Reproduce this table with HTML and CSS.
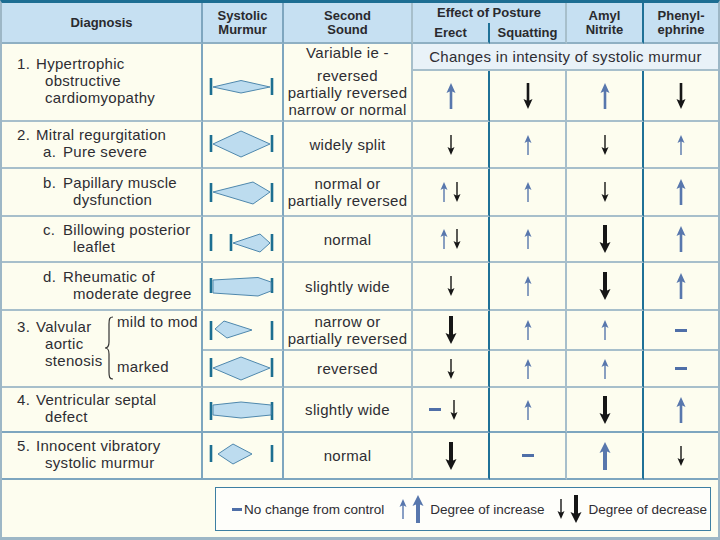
FILE: index.html
```html
<!DOCTYPE html>
<html>
<head>
<meta charset="utf-8">
<link rel="stylesheet" href="styles.css">
</head>
<body>
<svg class="defs" width="0" height="0">
  <defs>
    <symbol id="us" viewBox="0 0 8 20"><path d="M4 0 L7.5 8 L4.7 6.6 V20 H3.3 V6.6 L0.5 8 Z"/></symbol>
    <symbol id="ds" viewBox="0 0 8 20"><path d="M4 20 L7.5 12 L4.7 13.4 V0 H3.3 V13.4 L0.5 12 Z"/></symbol>
    <symbol id="um" viewBox="0 0 10 26"><path d="M5 0 L9.5 10 L6.3 8.6 V26 H3.7 V8.6 L0.5 10 Z"/></symbol>
    <symbol id="dm" viewBox="0 0 10 26"><path d="M5 26 L9.5 16 L6.3 17.4 V0 H3.7 V17.4 L0.5 16 Z"/></symbol>
    <symbol id="ul" viewBox="0 0 12 28"><path d="M6 0 L11.5 11 L8 9.5 V28 H4 V9.5 L0.5 11 Z"/></symbol>
    <symbol id="dl" viewBox="0 0 12 28"><path d="M6 28 L11.5 17 L8 18.5 V0 H4 V18.5 L0.5 17 Z"/></symbol>
  </defs>
</svg>

<div class="tbl">
  <!-- header -->
  <div class="c h k1 r2">Diagnosis</div>
  <div class="c h k2 r2">Systolic<br>Murmur</div>
  <div class="c h k3 r2">Second<br>Sound</div>
  <div class="c h k5 eff">Effect of Posture</div>
  <div class="c h k6 r2">Amyl<br>Nitrite</div>
  <div class="c h k7 r2">Phenyl-<br>ephrine</div>
  <div class="c h k4">Erect</div>
  <div class="c h k5">Squatting</div>

  <!-- 1 -->
  <div class="c dx k1 r2 pb4">
    <div class="ln i0"><span class="n">1.</span>Hypertrophic</div>
    <div class="ln i1">obstructive</div>
    <div class="ln i1">cardiomyopathy</div>
  </div>
  <div class="c mm k2 r2"><svg width="79" height="76"><rect class="bar" x="6.7" y="34" width="2.6" height="17"/><rect class="bar" x="67.7" y="34" width="2.6" height="17"/><polygon class="sh" points="10,43 38,36.5 67,43 38,49"/></svg></div>
  <div class="c ss k3 r2 top">
    <div class="ln first">Variable ie -</div>
    <div class="ln">reversed</div>
    <div class="ln">partially reversed</div>
    <div class="ln">narrow or normal</div>
  </div>
  <div class="c chg">Changes in intensity of systolic murmur</div>
  <div class="c ac k4"><svg class="ar um bl"><use href="#um"/></svg></div>
  <div class="c ac k5"><svg class="ar dm bk"><use href="#dm"/></svg></div>
  <div class="c ac k6"><svg class="ar um bl"><use href="#um"/></svg></div>
  <div class="c ac k7"><svg class="ar dm bk"><use href="#dm"/></svg></div>

  <!-- 2a -->
  <div class="c dx k1">
    <div class="ln i0"><span class="n">2.</span>Mitral regurgitation</div>
    <div class="ln i2"><span class="m">a.</span>Pure severe</div>
  </div>
  <div class="c mm k2"><svg width="79" height="45"><rect class="bar" x="6.7" y="13" width="2.6" height="17"/><rect class="bar" x="67.7" y="13" width="2.6" height="17"/><polygon class="sh" points="10,22 38,9 67,22 38,35"/></svg></div>
  <div class="c ss k3"><div class="ln">widely split</div></div>
  <div class="c ac k4"><svg class="ar ds bk"><use href="#ds"/></svg></div>
  <div class="c ac k5"><svg class="ar us bl"><use href="#us"/></svg></div>
  <div class="c ac k6"><svg class="ar ds bk"><use href="#ds"/></svg></div>
  <div class="c ac k7"><svg class="ar us bl"><use href="#us"/></svg></div>

  <!-- 2b -->
  <div class="c dx k1">
    <div class="ln i2"><span class="m">b.</span>Papillary muscle</div>
    <div class="ln i3">dysfunction</div>
  </div>
  <div class="c mm k2"><svg width="79" height="46"><rect class="bar" x="6.7" y="14" width="2.6" height="19"/><rect class="bar" x="67.7" y="14" width="2.6" height="19"/><polygon class="sh" points="10,23 50,13 67,23 50,35"/></svg></div>
  <div class="c ss k3"><div class="ln">normal or</div><div class="ln">partially reversed</div></div>
  <div class="c ac k4"><svg class="ar us bl"><use href="#us"/></svg><svg class="ar ds bk"><use href="#ds"/></svg></div>
  <div class="c ac k5"><svg class="ar us bl"><use href="#us"/></svg></div>
  <div class="c ac k6"><svg class="ar ds bk"><use href="#ds"/></svg></div>
  <div class="c ac k7"><svg class="ar um bl"><use href="#um"/></svg></div>

  <!-- 2c -->
  <div class="c dx k1">
    <div class="ln i2"><span class="m">c.</span>Billowing posterior</div>
    <div class="ln i3">leaflet</div>
  </div>
  <div class="c mm k2"><svg width="79" height="44"><rect class="bar" x="6.7" y="17" width="2.6" height="17"/><rect class="bar" x="26.7" y="17" width="2.6" height="17"/><rect class="bar" x="67.7" y="17" width="2.6" height="17"/><polygon class="sh" points="30,26 57,17 67,26 57,35"/></svg></div>
  <div class="c ss k3"><div class="ln">normal</div></div>
  <div class="c ac k4"><svg class="ar us bl"><use href="#us"/></svg><svg class="ar ds bk"><use href="#ds"/></svg></div>
  <div class="c ac k5"><svg class="ar us bl"><use href="#us"/></svg></div>
  <div class="c ac k6"><svg class="ar dl bk"><use href="#dl"/></svg></div>
  <div class="c ac k7"><svg class="ar um bl"><use href="#um"/></svg></div>

  <!-- 2d -->
  <div class="c dx k1">
    <div class="ln i2"><span class="m">d.</span>Rheumatic of</div>
    <div class="ln i3">moderate degree</div>
  </div>
  <div class="c mm k2"><svg width="79" height="46"><rect class="bar" x="6.7" y="15" width="2.6" height="15"/><rect class="bar" x="67.7" y="15" width="2.6" height="15"/><polygon class="sh" points="10,17 55,14.5 68,19 68,28 55,33 10,30"/></svg></div>
  <div class="c ss k3"><div class="ln">slightly wide</div></div>
  <div class="c ac k4"><svg class="ar ds bk"><use href="#ds"/></svg></div>
  <div class="c ac k5"><svg class="ar us bl"><use href="#us"/></svg></div>
  <div class="c ac k6"><svg class="ar dl bk"><use href="#dl"/></svg></div>
  <div class="c ac k7"><svg class="ar um bl"><use href="#um"/></svg></div>

  <!-- 3 mild -->
  <div class="c dx3 k1 r2">
    <div class="v3">
      <div class="ln"><span class="n">3.</span>Valvular</div>
      <div class="ln i4">aortic</div>
      <div class="ln i4">stenosis</div>
    </div>
    <svg class="brace" width="10" height="64"><path d="M9 1 C5.5 1 5 3 5 8 V26 C5 30 4 32 1 32 C4 32 5 34 5 38 V56 C5 61 5.5 63 9 63"/></svg>
    <div class="sev">
      <div class="ln">mild to mod</div>
      <div class="ln mk">marked</div>
    </div>
  </div>
  <div class="c mm k2"><svg width="79" height="38"><rect class="bar" x="6.7" y="10" width="2.6" height="19"/><rect class="bar" x="67.7" y="10" width="2.6" height="19"/><polygon class="sh" points="12,18 21,10 49,19 24,27"/></svg></div>
  <div class="c ss k3"><div class="ln">narrow or</div><div class="ln">partially reversed</div></div>
  <div class="c ac k4"><svg class="ar dl bk"><use href="#dl"/></svg></div>
  <div class="c ac k5"><svg class="ar us bl"><use href="#us"/></svg></div>
  <div class="c ac k6"><svg class="ar us bl"><use href="#us"/></svg></div>
  <div class="c ac k7"><span class="dash"></span></div>

  <!-- 3 marked -->
  <div class="c mm k2"><svg width="79" height="35"><rect class="bar" x="6.7" y="7" width="2.6" height="19"/><rect class="bar" x="67.7" y="7" width="2.6" height="19"/><polygon class="sh" points="10,17 38,6 67,17 38,29"/></svg></div>
  <div class="c ss k3"><div class="ln">reversed</div></div>
  <div class="c ac k4"><svg class="ar ds bk"><use href="#ds"/></svg></div>
  <div class="c ac k5"><svg class="ar us bl"><use href="#us"/></svg></div>
  <div class="c ac k6"><svg class="ar us bl"><use href="#us"/></svg></div>
  <div class="c ac k7"><span class="dash"></span></div>

  <!-- 4 -->
  <div class="c dx k1 bd">
    <div class="ln i0"><span class="n">4.</span>Ventricular septal</div>
    <div class="ln i1">defect</div>
  </div>
  <div class="c mm k2 bd"><svg width="79" height="43"><rect class="bar" x="6.7" y="14" width="2.6" height="18"/><rect class="bar" x="67.7" y="14" width="2.6" height="18"/><polygon class="sh" points="10,17 38,14 68,17 68,27 38,30 10,27"/></svg></div>
  <div class="c ss k3 bd"><div class="ln">slightly wide</div></div>
  <div class="c ac k4 bd shift"><span class="dash"></span><svg class="ar ds bk"><use href="#ds"/></svg></div>
  <div class="c ac k5 bd"><svg class="ar us bl"><use href="#us"/></svg></div>
  <div class="c ac k6 bd"><svg class="ar dl bk"><use href="#dl"/></svg></div>
  <div class="c ac k7 bd"><svg class="ar um bl"><use href="#um"/></svg></div>

  <!-- 5 -->
  <div class="c dx k1 bd">
    <div class="ln i0"><span class="n">5.</span>Innocent vibratory</div>
    <div class="ln i1">systolic murmur</div>
  </div>
  <div class="c mm k2 bd"><svg width="79" height="45"><rect class="bar" x="6.7" y="12" width="2.6" height="17"/><rect class="bar" x="67.7" y="12" width="2.6" height="17"/><polygon class="sh" points="15,21 30,11 49,21 30,31"/></svg></div>
  <div class="c ss k3 bd"><div class="ln">normal</div></div>
  <div class="c ac k4 bd"><svg class="ar dl bk"><use href="#dl"/></svg></div>
  <div class="c ac k5 bd"><span class="dash"></span></div>
  <div class="c ac k6 bd"><svg class="ar ul bl"><use href="#ul"/></svg></div>
  <div class="c ac k7 bd"><svg class="ar ds bk"><use href="#ds"/></svg></div>

  <!-- legend -->
  <div class="lg">
    <div class="box">
      <span class="dash ldash"></span>
      <span class="lt">No change from control</span>
      <svg class="ar us bl l1"><use href="#us"/></svg>
      <svg class="ar ul bl l2"><use href="#ul"/></svg>
      <span class="lt l3">Degree of increase</span>
      <svg class="ar ds bk l4"><use href="#ds"/></svg>
      <svg class="ar dl bk l2"><use href="#dl"/></svg>
      <span class="lt l3">Degree of decrease</span>
    </div>
  </div>
</div>
</body>
</html>
```

FILE: styles.css
```css
* { box-sizing: border-box; margin: 0; padding: 0; }
html, body { width: 720px; height: 540px; overflow: hidden; background: #ffffff; }
body { font-family: "Liberation Sans", Arial, sans-serif; color: #2e2d33; }
.defs { position: absolute; width: 0; height: 0; }

.tbl {
  display: grid;
  width: 720px;
  height: 540px;
  grid-template-columns: 201px 81px 129px 77px 77px 77px 74px;
  grid-template-rows: 20px 21px 27px 51px 47px 48px 46px 48px 40px 37px 45px 47px 57px;
  border-top: 3px solid #1d6e93;
  border-left: 2px solid #9db7c6;
  border-right: 2px solid #9db7c6;
  border-bottom: 3px solid #9db7c6;
  background: #fdfdef;
}

.c {
  border-right: 2px solid #a7bfcb;
  border-bottom: 2px solid #a7bfcb;
  display: flex;
  align-items: center;
  justify-content: center;
}
.r2 { grid-row: span 2; }
.k1, .k2 { border-right-color: #7ea6bf; }
.k3, .k5 { border-right-color: #a7bfcb; }
.k4, .k6 { border-right-color: #1f7197; }
.k7 { border-right: none; }
.bd { border-bottom-color: #7ea6bf; }

/* header */
.h {
  background: #c6e0f2;
  font-weight: bold;
  font-size: 13px;
  line-height: 14px;
  text-align: center;
  color: #2a2a2e;
  border-bottom-color: #8fb0c3;
}
.eff { grid-column: span 2; border-bottom: none; }

/* text */
.ln { font-size: 15px; line-height: 17px; letter-spacing: 0.3px; white-space: nowrap; }
.dx { flex-direction: column; align-items: flex-start; justify-content: center; padding-bottom: 3px; }
.pb4 { padding-bottom: 4px; }
.i0 { padding-left: 15px; }
.i1 { padding-left: 43px; }
.i2 { padding-left: 41px; }
.i3 { padding-left: 71px; }
.i4 { padding-left: 28px; }
.n { display: inline-block; width: 19px; }
.m { display: inline-block; width: 20px; }

.ss { flex-direction: column; text-align: center; }
.top { justify-content: flex-start; }
.first { margin-bottom: 6px; }

.chg {
  grid-column: span 4;
  background: #e9f2f8;
  border-right: none;
  font-size: 15px;
  letter-spacing: 0.3px;
}

/* row 3 diagnosis */
.dx3 { justify-content: flex-start; align-items: flex-start; padding-left: 15px; }
.v3 { width: 87px; padding-top: 7px; }
.brace { display: block; margin-top: 5px; margin-right: 3px; }
.brace path { fill: none; stroke: #333; stroke-width: 1.2; }
.sev { padding-top: 2px; }
.mk { margin-top: 28px; }

/* murmur */
.mm { display: block; }
.mm svg { display: block; }
.bar { fill: #1d6f91; }
.sh { fill: #bddcef; stroke: #4f88ad; stroke-width: 1; }

/* arrows */
.ac { gap: 5px; }
.ar { display: block; }
.ar.us, .ar.ds { width: 8px; height: 20px; }
.ar.um, .ar.dm { width: 10px; height: 26px; }
.ar.ul, .ar.dl { width: 12px; height: 28px; }
.bl { fill: #5877ad; }
.bk { fill: #161616; }
.dash { display: block; width: 12px; height: 3px; background: #4f6fa8; }
.shift { padding-right: 14px; gap: 9px; }

/* legend */
.lg { grid-column: span 7; padding: 7px 0 0 213px; }
.box {
  width: 496px;
  height: 44px;
  border: 1.5px solid #3d7fa2;
  background: #fefefa;
  display: flex;
  align-items: center;
  padding-left: 16px;
}
.ldash { width: 10px; margin-right: 2px; }
.lt { font-size: 13.5px; white-space: nowrap; }
.l1 { margin-left: 15px; }
.l2 { margin-left: 5px; }
.l3 { margin-left: 6px; }
.l4 { margin-left: 13px; }
```
